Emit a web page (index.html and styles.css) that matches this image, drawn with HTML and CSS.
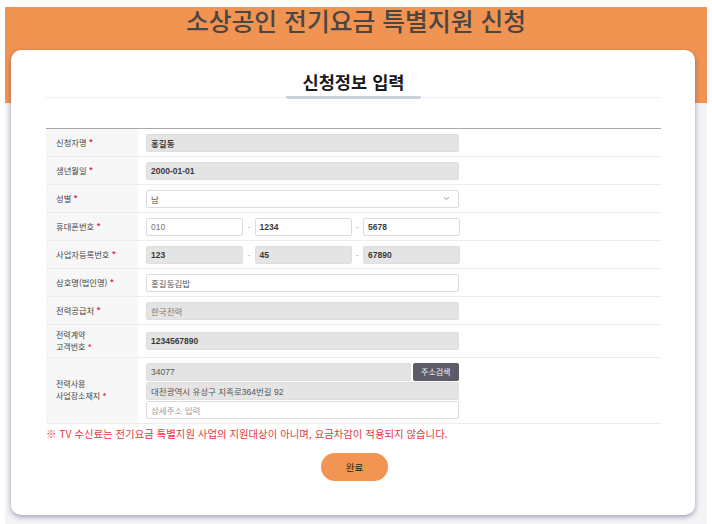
FILE: index.html
```html
<!DOCTYPE html>
<html lang="ko">
<head>
<meta charset="utf-8">
<title>소상공인 전기요금 특별지원 신청</title>
<link rel="stylesheet" href="styles.css">
</head>
<body>
<div class="page">
  <header class="hero">
    <h1 class="hero-title">소상공인 전기요금 특별지원 신청</h1>
  </header>
  <main class="card">
    <div class="card-head">
      <h2 class="card-title">신청정보 입력</h2>
    </div>
    <div class="form">
      <div class="row">
        <div class="label">신청자명 <span class="req">*</span></div>
        <div class="value"><div class="field dis bold">홍길동</div></div>
      </div>
      <div class="row">
        <div class="label">생년월일 <span class="req">*</span></div>
        <div class="value"><div class="field dis bold">2000-01-01</div></div>
      </div>
      <div class="row">
        <div class="label">성별 <span class="req">*</span></div>
        <div class="value">
          <div class="field select">남
            <svg class="chev" width="7" height="5" viewBox="0 0 7 5"><path d="M1 1.2 L3.5 3.6 L6 1.2" fill="none" stroke="#888" stroke-width="0.9"/></svg>
          </div>
        </div>
      </div>
      <div class="row">
        <div class="label">휴대폰번호 <span class="req">*</span></div>
        <div class="value split">
          <div class="field part light">010</div><span class="dash">-</span>
          <div class="field part bold">1234</div><span class="dash">-</span>
          <div class="field part bold">5678</div>
        </div>
      </div>
      <div class="row">
        <div class="label">사업자등록번호 <span class="req">*</span></div>
        <div class="value split">
          <div class="field part dis bold">123</div><span class="dash">-</span>
          <div class="field part dis bold">45</div><span class="dash">-</span>
          <div class="field part dis bold">67890</div>
        </div>
      </div>
      <div class="row">
        <div class="label">상호명(법인명) <span class="req">*</span></div>
        <div class="value"><div class="field">홍길동김밥</div></div>
      </div>
      <div class="row">
        <div class="label">전력공급처 <span class="req">*</span></div>
        <div class="value"><div class="field dis muted">한국전력</div></div>
      </div>
      <div class="row tall">
        <div class="label two">전력계약<br>고객번호 <span class="req">*</span></div>
        <div class="value"><div class="field dis bold">1234567890</div></div>
      </div>
      <div class="row addr">
        <div class="label two">전력사용<br>사업장소재지 <span class="req">*</span></div>
        <div class="value stack">
          <div class="addr-line">
            <div class="field dis zip">34077</div>
            <div class="btn-search">주소검색</div>
          </div>
          <div class="field dis">대전광역시 유성구 지족로364번길 92</div>
          <div class="field ph">상세주소 입력</div>
        </div>
      </div>
    </div>
    <p class="note">※ TV 수신료는 전기요금 특별지원 사업의 지원대상이 아니며, 요금차감이 적용되지 않습니다.</p>
    <div class="actions">
      <div class="btn-done">완료</div>
    </div>
  </main>
</div>
</body>
</html>
```

FILE: styles.css
```css
* { box-sizing: border-box; }
html, body { margin: 0; padding: 0; background: #ffffff; }
body {
  font-family: "Liberation Sans", "Noto Sans CJK KR", sans-serif;
  color: #333;
}
.page {
  margin: 0 5px;
  padding-top: 7px;
  height: 524px;
  background: linear-gradient(#ffffff 0 7px, #f4f4f6 7px);
}
.hero {
  height: 96px;
  background: #f19351;
}
.hero-title {
  margin: 0;
  text-align: center;
  font-family: "Noto Sans CJK KR", sans-serif;
  font-weight: 500;
  font-size: 24.8px;
  line-height: 27px;
  color: #4a4644;
}
.card {
  margin: -53px 12px 0 6px;
  height: 465px;
  background: #fff;
  border-radius: 10px;
  box-shadow: 0 2px 5px rgba(70, 70, 120, 0.5);
  padding: 22px 34px 0 35px;
}
.card-head {
  text-align: center;
  border-bottom: 1px solid #eceff3;
}
.card-title {
  display: inline-block;
  margin: 0 0 -2px 0;
  padding: 0 16px 4px;
  font-family: "Noto Sans CJK KR", sans-serif;
  font-weight: 700;
  font-size: 17.6px;
  line-height: 20px;
  color: #1a1a1a;
  border-bottom: 3px solid #c9d1dc;
  border-radius: 0 0 2px 2px;
}
.form {
  margin-top: 30px;
  border-top: 1px solid #a9a9b0;
}
.row {
  display: flex;
  height: 28px;
  border-bottom: 1px solid #ececec;
}
.row.tall { height: 33px; }
.row.addr { height: 66px; }
.label {
  width: 92px;
  flex: none;
  background: #f7f7f7;
  padding-left: 10px;
  font-family: "Noto Sans CJK KR", sans-serif;
  font-size: 8.3px;
  line-height: 27px;
  color: #444;
  white-space: nowrap;
}
.label.two {
  font-size: 8px;
  line-height: 12px;
}
.row.tall .label.two { padding-top: 4px; }
.row.addr .label.two { padding-top: 20px; }
.req { color: #e3305a; font-weight: 700; }
.value {
  flex: 1;
  display: flex;
  align-items: center;
  padding-left: 8px;
}
.field {
  width: 313px;
  height: 18px;
  border: 1px solid #dcdcdc;
  border-radius: 2px;
  background: #fff;
  padding: 0 4px;
  display: flex;
  align-items: center;
  font-size: 8.5px;
  color: #555;
  white-space: nowrap;
}
.field.dis { background: #e4e4e4; border-color: #dedede; }
.field.bold { font-weight: 700; color: #3a3a3a; }
.field.muted { color: #7a7a7a; }
.field.light { color: #777; }
.field.ph { color: #9a9a9a; }
.field.select { justify-content: space-between; padding-right: 8px; }
.chev { display: block; }
.split { gap: 0; }
.field.part { width: 97px; }
.dash {
  width: 11.5px;
  text-align: center;
  font-size: 8px;
  color: #999;
}
.stack {
  flex-direction: column;
  align-items: flex-start;
  justify-content: center;
  gap: 1px;
}
.addr-line { display: flex; gap: 1.5px; }
.field.zip { width: 265px; }
.btn-search {
  width: 46.5px;
  height: 18px;
  background: #5c5b67;
  border-radius: 2px;
  color: #f2f2f2;
  font-family: "Noto Sans CJK KR", sans-serif;
  font-size: 8px;
  display: flex;
  align-items: center;
  justify-content: center;
}
.note {
  margin: 3px 0 0 0;
  font-family: "Noto Sans CJK KR", sans-serif;
  font-size: 10.4px;
  line-height: 14px;
  color: #e6373f;
}
.actions {
  display: flex;
  justify-content: center;
  margin-top: 12px;
}
.btn-done {
  width: 67px;
  height: 28px;
  border-radius: 14px;
  background: #f29553;
  color: #2e2620;
  font-family: "Noto Sans CJK KR", sans-serif;
  font-size: 9.5px;
  display: flex;
  align-items: center;
  justify-content: center;
  margin-left: 2px;
}
```
